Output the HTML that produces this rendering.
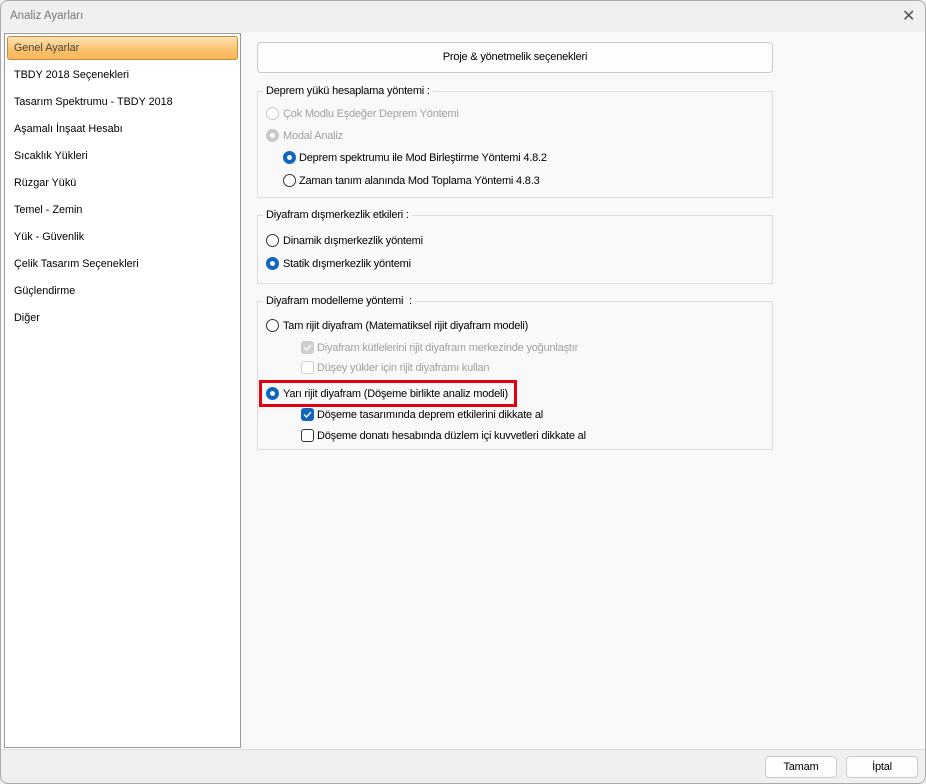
<!DOCTYPE html>
<html><head><meta charset="utf-8"><style>
*{box-sizing:border-box;margin:0;padding:0}
body{width:926px;height:784px;background:#f0f0f0;font-family:"Liberation Sans",sans-serif;font-size:11px;letter-spacing:-0.2px;color:#000;position:relative;overflow:hidden}
.win{position:absolute;left:0;top:0;width:926px;height:784px;border:1px solid #aaa;border-radius:8px;background:#f0f0f0;overflow:hidden}
.title{position:absolute;left:9px;top:9px;color:#777;font-size:11.5px;letter-spacing:0}
.close{position:absolute;left:901px;top:5px;color:#555;font-size:16px}
.main{position:absolute;left:0;top:31px;width:926px;height:718px;background:#f9f9f9;border-bottom:1px solid #ddd}
.list{position:absolute;left:3px;top:32px;width:237px;height:715px;background:#fff;border:1px solid #999}
.item{position:absolute;left:9px;font-size:10.8px;letter-spacing:0}
.sel{position:absolute;left:2px;top:2px;width:231px;height:24px;border:1px solid #c58a3c;border-radius:3px;background:linear-gradient(#fde2b4,#fbc36f 55%,#f9b65a);}
.a{position:absolute;white-space:nowrap;margin-top:1px}
.box{position:absolute;border:1px solid #dcdcdc}
.leg{position:absolute;background:#f9f9f9;padding:0 3px;white-space:nowrap}
.r{position:absolute;width:13px;height:13px;border-radius:50%;border:1px solid #333;background:#fff}
.r.on{border:4px solid #0f67c0;background:#fff}
.r.dis{border-color:#c8c8c8}
.r.disOn{border:4px solid #c8c8c8}
.c{position:absolute;width:13px;height:13px;border-radius:3px;border:1px solid #333;background:#fff}
.c svg{position:absolute;left:0;top:0}
.c.dis{border-color:#cfcfcf}
.c.disOn{background:#cfcfcf;border-color:#cfcfcf}
.c.on{background:#0f67c0;border-color:#0f67c0}
.gray{color:#a0a0a0}
.btn{position:absolute;border:1px solid #ccc;border-radius:4px;background:#fdfdfd;text-align:center}
</style></head><body><div class="win">
<div class="title">Analiz Ayarları</div>
<div class="close">✕</div>
<div class="main"></div>
<div class="list">
<div class="sel"></div>
<div class="item" style="top:8px;color:#444">Genel Ayarlar</div>
<div class="item" style="top:35px">TBDY 2018 Seçenekleri</div>
<div class="item" style="top:62px">Tasarım Spektrumu - TBDY 2018</div>
<div class="item" style="top:89px">Aşamalı İnşaat Hesabı</div>
<div class="item" style="top:116px">Sıcaklık Yükleri</div>
<div class="item" style="top:143px">Rüzgar Yükü</div>
<div class="item" style="top:170px">Temel - Zemin</div>
<div class="item" style="top:197px">Yük - Güvenlik</div>
<div class="item" style="top:224px">Çelik Tasarım Seçenekleri</div>
<div class="item" style="top:251px">Güçlendirme</div>
<div class="item" style="top:278px">Diğer</div>
</div>
<div class="btn" style="left:256px;top:41px;width:516px;height:31px;line-height:29px">Proje &amp; yönetmelik seçenekleri</div>

<div class="box" style="left:256px;top:90px;width:516px;height:107px"></div>
<div class="leg" style="left:262px;top:84px">Deprem yükü hesaplama yöntemi :</div>
<div class="r dis" style="left:265px;top:106px"></div><div class="a gray" style="left:282px;top:106px">Çok Modlu Eşdeğer Deprem Yöntemi</div>
<div class="r disOn" style="left:265px;top:128px"></div><div class="a gray" style="left:282px;top:128px">Modal Analiz</div>
<div class="r on" style="left:282px;top:150px"></div><div class="a" style="left:298px;top:150px">Deprem spektrumu ile Mod Birleştirme Yöntemi 4.8.2</div>
<div class="r" style="left:282px;top:173px"></div><div class="a" style="left:298px;top:173px">Zaman tanım alanında Mod Toplama Yöntemi 4.8.3</div>

<div class="box" style="left:256px;top:214px;width:516px;height:69px"></div>
<div class="leg" style="left:262px;top:208px">Diyafram dışmerkezlik etkileri :</div>
<div class="r" style="left:265px;top:233px"></div><div class="a" style="left:282px;top:233px">Dinamik dışmerkezlik yöntemi</div>
<div class="r on" style="left:265px;top:256px"></div><div class="a" style="left:282px;top:256px">Statik dışmerkezlik yöntemi</div>

<div class="box" style="left:256px;top:300px;width:516px;height:149px"></div>
<div class="leg" style="left:262px;top:294px">Diyafram modelleme yöntemi &nbsp;:</div>
<div class="r" style="left:265px;top:318px"></div><div class="a" style="left:282px;top:318px">Tam rijit diyafram (Matematiksel rijit diyafram modeli)</div>
<div class="c disOn" style="left:300px;top:340px"><svg width="11" height="11"><path d="M2 5.5l2.5 2.5 4.5-5" stroke="#fff" stroke-width="1.4" fill="none"/></svg></div><div class="a gray" style="left:316px;top:340px">Diyafram kütlelerini rijit diyafram merkezinde yoğunlaştır</div>
<div class="c dis" style="left:300px;top:360px"></div><div class="a gray" style="left:316px;top:360px">Düşey yükler için rijit diyaframı kullan</div>
<div class="a" style="left:258px;top:379px;width:258px;height:27px;border:3px solid #e0000f;margin:0"></div>
<div class="r on" style="left:265px;top:386px"></div><div class="a" style="left:282px;top:386px">Yarı rijit diyafram (Döşeme birlikte analiz modeli)</div>
<div class="c on" style="left:300px;top:407px"><svg width="11" height="11"><path d="M2 5.5l2.5 2.5 4.5-5" stroke="#fff" stroke-width="1.4" fill="none"/></svg></div><div class="a" style="left:316px;top:407px">Döşeme tasarımında deprem etkilerini dikkate al</div>
<div class="c" style="left:300px;top:428px"></div><div class="a" style="left:316px;top:428px">Döşeme donatı hesabında düzlem içi kuvvetleri dikkate al</div>

<div class="btn" style="left:764px;top:755px;width:72px;height:22px;line-height:20px">Tamam</div>
<div class="btn" style="left:845px;top:755px;width:72px;height:22px;line-height:20px">İptal</div>
</div></body></html>
